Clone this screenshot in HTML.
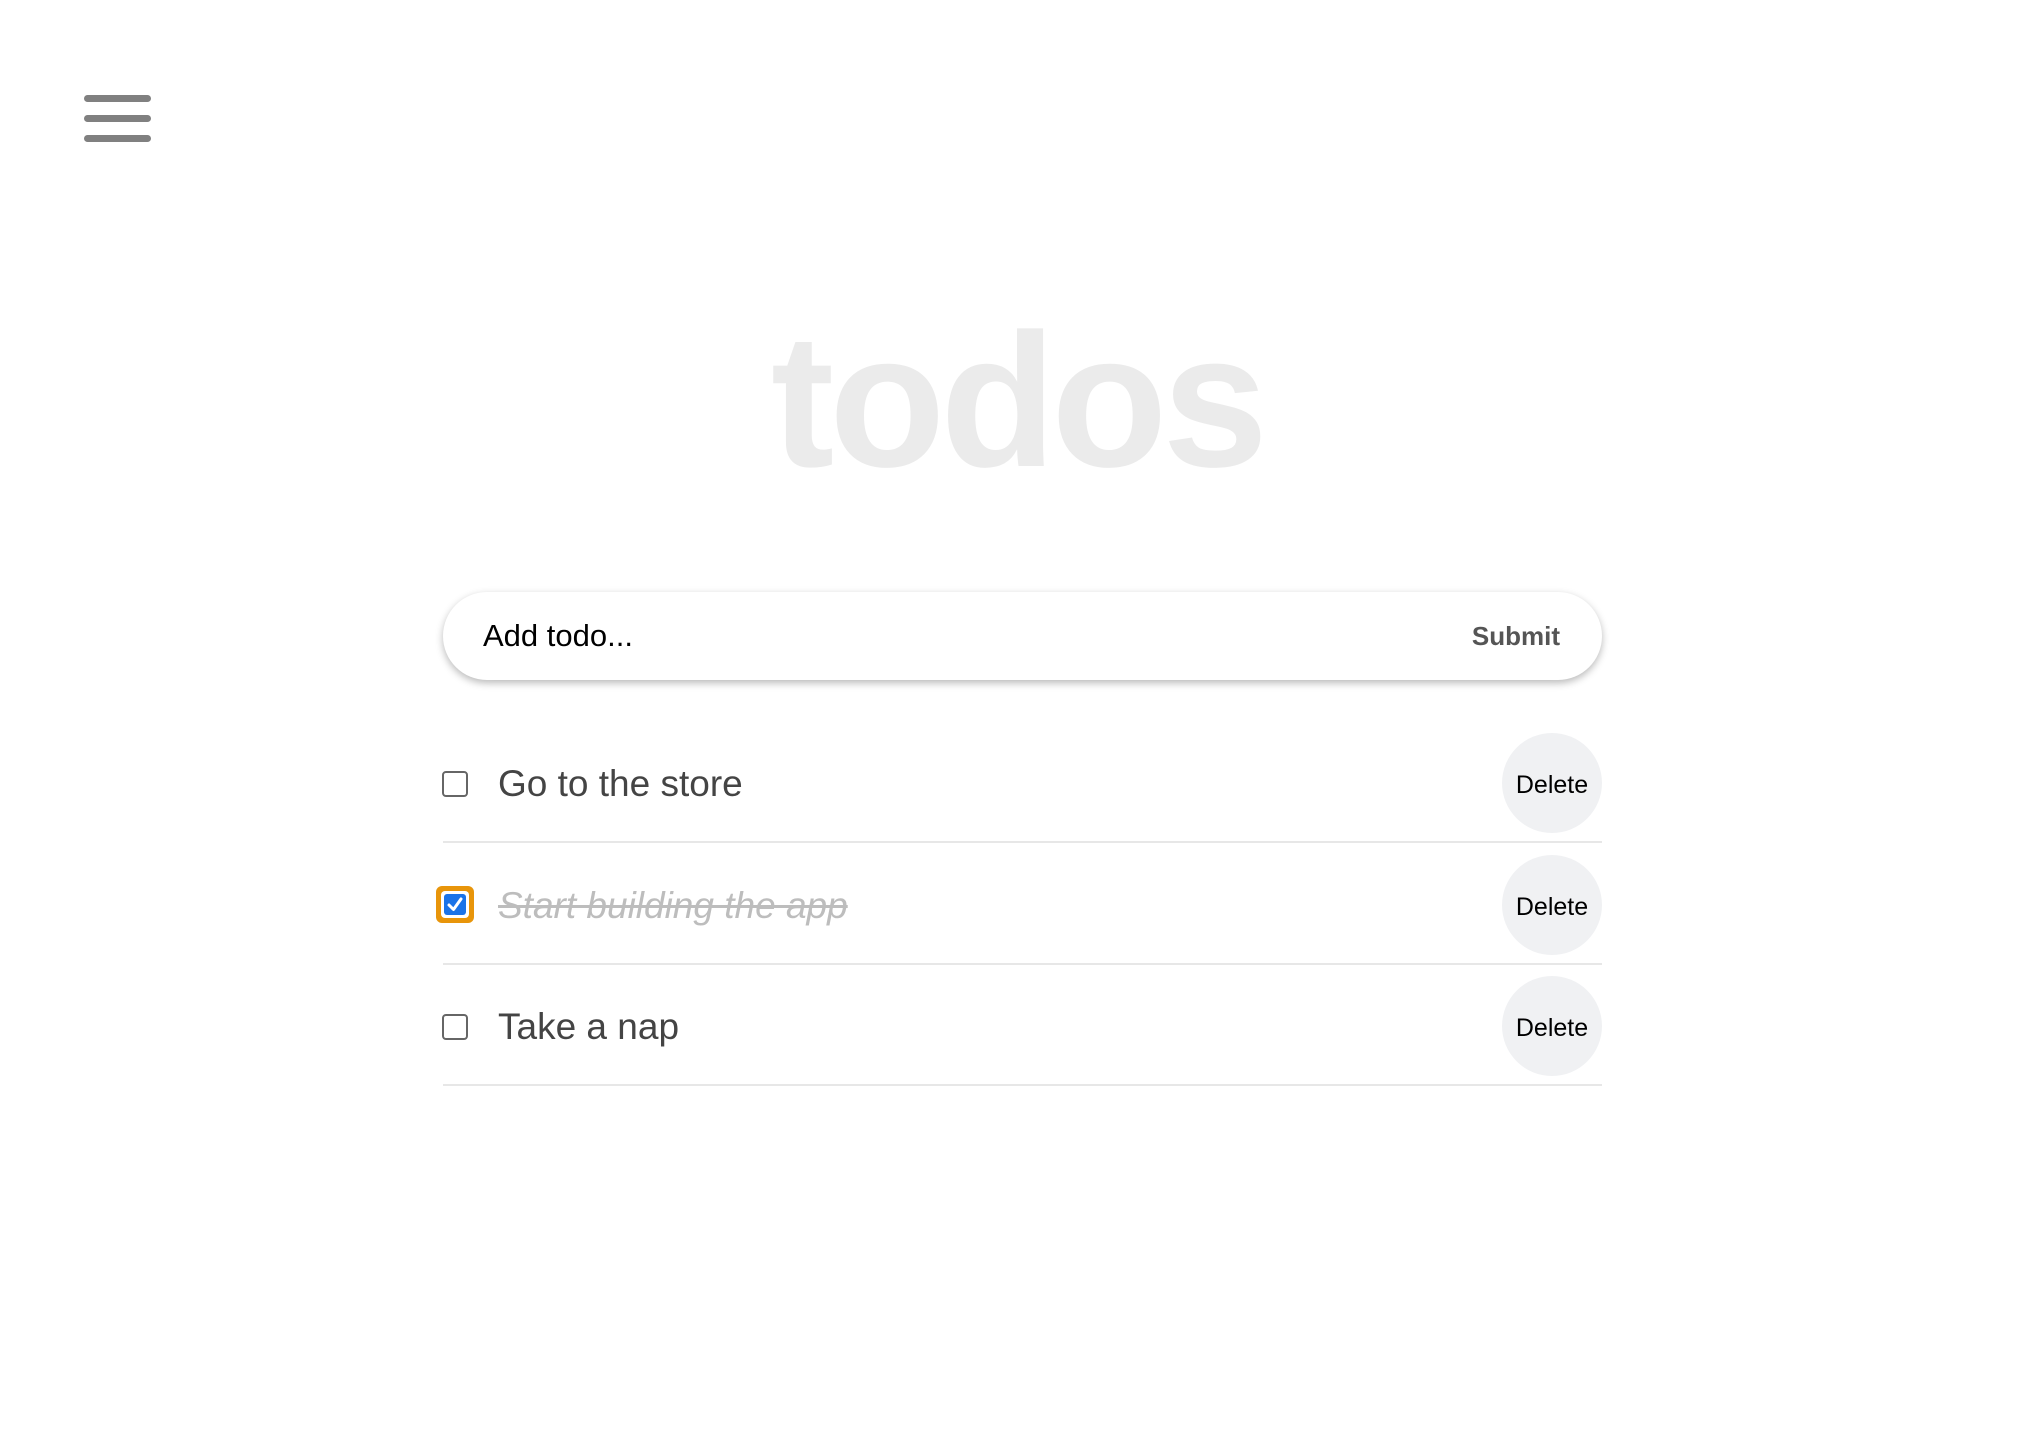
<!DOCTYPE html>
<html><head><meta charset="utf-8"><style>
html,body{margin:0;padding:0;background:#fff;width:2044px;height:1452px;overflow:hidden;position:relative;font-family:"Liberation Sans",Arial,sans-serif}
.bar{position:absolute;left:84px;width:67px;height:7px;border-radius:4px;background:#808080}
.title{position:absolute;left:0;width:2034px;text-align:center;top:286px;font-size:190px;line-height:230px;font-weight:bold;color:#ebebeb;letter-spacing:-5px}
.input{position:absolute;left:443px;top:592px;width:1159px;height:88px;border-radius:44px;background:#fff;box-shadow:0 3px 8px rgba(0,0,0,0.28)}
.ph{position:absolute;left:40px;top:0;line-height:88px;font-size:31px;color:#000}
.sub{position:absolute;right:42px;top:0;line-height:88px;font-size:26px;font-weight:bold;color:#555}
.row{position:absolute;left:443px;width:1159px;height:121px;border-bottom:2px solid #e7e7e7}
.cb{position:absolute;left:-1px;top:51px;width:22px;height:22px;border:2px solid #666;border-radius:4px;box-sizing:content-box}
.txt{position:absolute;left:55px;top:39px;font-size:37px;line-height:50px;color:#444}
.del{position:absolute;left:1059px;top:13px;width:100px;height:100px;border-radius:50%;background:#f0f1f3;text-align:center;line-height:104px;font-size:25px;color:#000}
</style></head><body>
<div class="bar" style="top:95px"></div>
<div class="bar" style="top:115px"></div>
<div class="bar" style="top:135px"></div>
<div class="title">todos</div>
<div class="input"><div class="ph">Add todo...</div><div class="sub">Submit</div></div>

<div class="row" style="top:720px">
 <div class="cb"></div>
 <div class="txt">Go to the store</div>
 <div class="del">Delete</div>
</div>
<div class="row" style="top:842px">
 <div style="position:absolute;left:-7px;top:44px;width:38px;height:37px;border-radius:6px;background:#e8950a"></div>
 <div style="position:absolute;left:-2px;top:49px;width:28px;height:27px;border-radius:4px;background:#fff"></div>
 <div style="position:absolute;left:1px;top:52px;width:22px;height:21px;border-radius:3px;background:#1a73e8"></div>
 <svg style="position:absolute;left:1px;top:52px" width="22" height="21" viewBox="0 0 22 21"><path d="M5 11 L9.5 15.5 L17 5" fill="none" stroke="#fff" stroke-width="3" stroke-linecap="round" stroke-linejoin="round"/></svg>
 <div class="txt" style="color:#bdbdbd;font-style:italic;text-decoration:line-through">Start building the app</div>
 <div class="del">Delete</div>
</div>
<div class="row" style="top:963px">
 <div class="cb"></div>
 <div class="txt">Take a nap</div>
 <div class="del">Delete</div>
</div>
</body></html>
